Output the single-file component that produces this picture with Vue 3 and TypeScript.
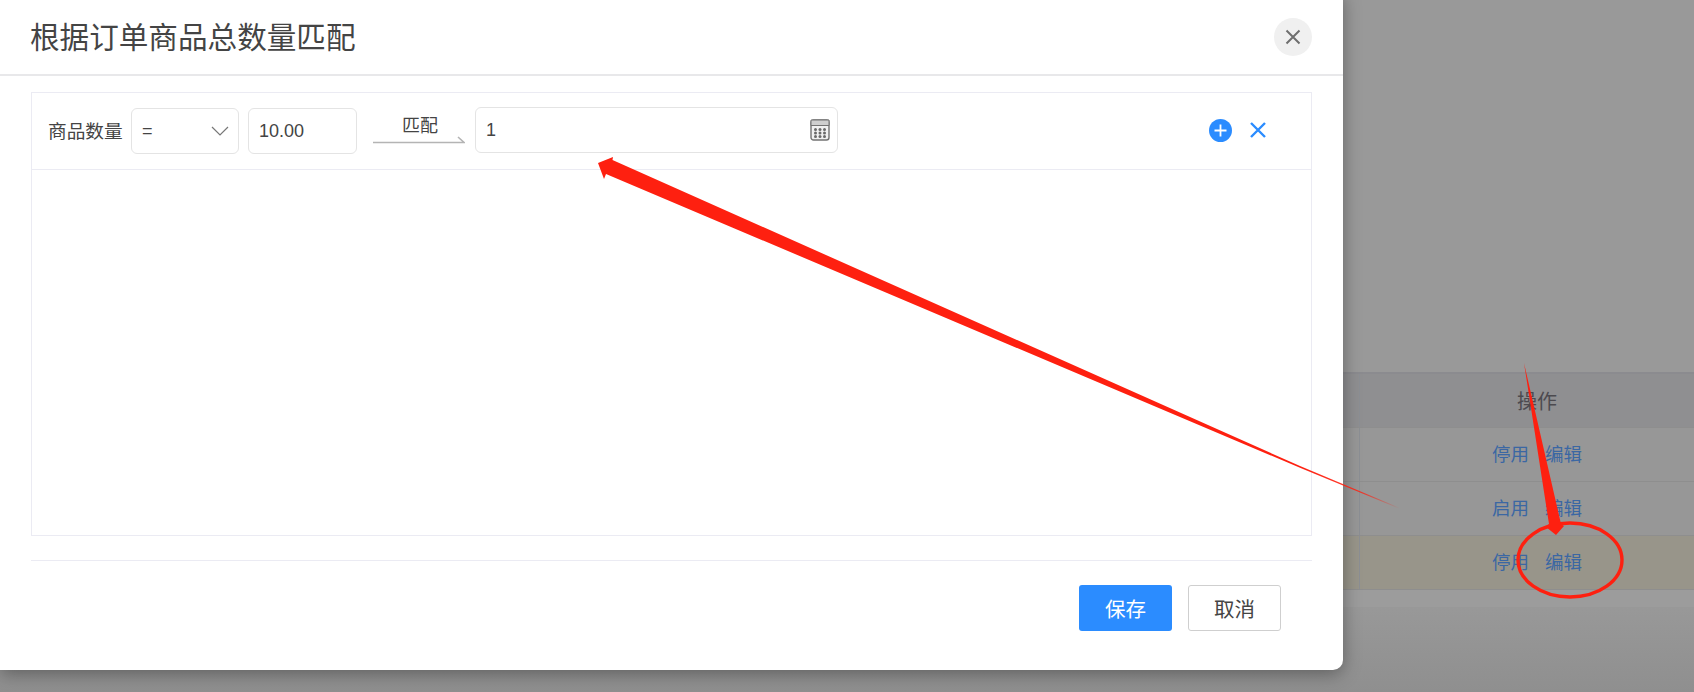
<template>
  <div class="page">
    <div class="bg-table">
      <div class="bg-head">
        <div class="bg-spacer"></div>
        <div class="bg-cell bg-title">操作</div>
      </div>
      <div
        v-for="row in rows"
        :key="row.id"
        class="bg-row"
        :class="{ 'is-active': row.active }"
      >
        <div class="bg-spacer"></div>
        <div class="bg-cell bg-links">
          <a class="bg-link">{{ row.action }}</a>
          <a class="bg-link">编辑</a>
        </div>
      </div>
      <div class="bg-foot"></div>
    </div>

    <section class="modal">
      <header class="modal-head">
        <h2 class="modal-title">根据订单商品总数量匹配</h2>
        <button class="close-btn" type="button">
          <svg width="16" height="16" viewBox="0 0 16 16">
            <path d="M1.5 1.5 L14.5 14.5 M14.5 1.5 L1.5 14.5" stroke="#6f6f6f" stroke-width="2" fill="none" />
          </svg>
        </button>
      </header>

      <div class="modal-body">
        <div class="rule-box">
          <div class="rule-row">
            <span class="rule-label">商品数量</span>
            <div class="field select-field">
              <span>=</span>
              <svg width="18" height="10" viewBox="0 0 18 10">
                <path d="M1 1 L9 9 L17 1" stroke="#777" stroke-width="1.2" fill="none" />
              </svg>
            </div>
            <div class="field num-field">10.00</div>
            <div class="match-arrow">
              <span class="match-text">匹配</span>
              <svg width="92" height="8" viewBox="0 0 92 8">
                <path d="M0 6.5 H91 L85 1" stroke="#b4b4b4" stroke-width="1.6" fill="none" />
              </svg>
            </div>
            <div class="field value-field">
              <span>1</span>
              <svg width="20" height="22" viewBox="0 0 20 22">
                <rect x="1" y="1" width="18" height="20" rx="2.5" fill="#f1f1f1" stroke="#737373" stroke-width="1.4" />
                <path d="M1 1 H19 V6.5 H1 Z" fill="#cfcfcf" stroke="#737373" stroke-width="1" />
                <g fill="#6a6a6a">
                  <circle v-for="dot in dots" :key="dot.id" :cx="dot.x" :cy="dot.y" r="1.5" />
                </g>
              </svg>
            </div>
            <div class="rule-actions">
              <svg width="23" height="23" viewBox="0 0 23 23">
                <circle cx="11.5" cy="11.5" r="11.5" fill="#2b8cff" />
                <path d="M5.5 11.5 H17.5 M11.5 5.5 V17.5" stroke="#fff" stroke-width="1.8" />
              </svg>
              <svg width="16" height="16" viewBox="0 0 16 16">
                <path d="M1 1 L15 15 M15 1 L1 15" stroke="#2b8cff" stroke-width="2.4" fill="none" />
              </svg>
            </div>
          </div>
        </div>

        <footer class="modal-foot">
          <button class="btn btn-primary" type="button">保存</button>
          <button class="btn btn-plain" type="button">取消</button>
        </footer>
      </div>
    </section>

    <!-- 截图上手绘的红色标注 -->
    <svg class="marks" width="1694" height="692" viewBox="0 0 1694 692">
      <defs>
        <linearGradient id="tail" gradientUnits="userSpaceOnUse" x1="1300" y1="466" x2="1400" y2="508">
          <stop offset="0" stop-color="#fe2010" />
          <stop offset="0.6" stop-color="#fe2010" stop-opacity="0.85" />
          <stop offset="1" stop-color="#fe2010" stop-opacity="0" />
        </linearGradient>
      </defs>
      <path
        d="M598 163 L613 157 L612.5 160 L1300 466 L1300 467.8 L606 174 L604 179 Z"
        fill="#fe2010"
      />
      <path d="M1300 466 L1400 508 L1400 509 L1300 467.8 Z" fill="url(#tail)" />
      <ellipse cx="1570" cy="560" rx="52" ry="37" fill="none" stroke="#fe2010" stroke-width="3.4" />
      <path
        d="M1524 363 L1561 524 L1564 526 L1556 535 L1546 527 L1549 524 Z"
        fill="#fe2010"
      />
    </svg>
  </div>
</template>

<script setup lang="ts">
interface BgRow {
  id: number;
  action: string;
  active: boolean;
}

const rows: BgRow[] = [
  { id: 1, action: "停用", active: false },
  { id: 2, action: "启用", active: false },
  { id: 3, action: "停用", active: true },
];

const dots = [10.5, 14, 17.5].flatMap((y) =>
  [5.5, 10, 14.5].map((x) => ({ id: `${x}-${y}`, x, y }))
);
</script>

<style>
html,
body {
  margin: 0;
  background: #929292;
}
</style>

<style scoped>
.page {
  position: relative;
  width: 1694px;
  height: 692px;
  overflow: hidden;
  background: linear-gradient(#999 0, #999 600px, #8f8f8f 692px);
  font-family: "Liberation Sans", "Noto Sans CJK SC", sans-serif;
  color: #444;
}

.bg-table {
  padding-top: 372px;
}

.bg-head,
.bg-row {
  display: flex;
  border-bottom: 1px solid #8e8e8e;
  box-sizing: border-box;
}

.bg-head {
  height: 56px;
  background: #8f8f91;
  border-top: 2px solid #8b8b8f;
}

.bg-row {
  height: 54px;
  background: #979797;
}

.bg-row.is-active {
  background: #98958a;
}

.bg-foot {
  height: 17px;
  background: #9c9c9c;
}

.bg-spacer {
  width: 1360px;
  flex-shrink: 0;
  border-right: 1px solid #8c8f94;
  box-sizing: border-box;
}

.bg-cell {
  flex: 1;
  display: flex;
  align-items: center;
  justify-content: center;
  gap: 16px;
  padding-left: 20px;
}

.bg-links {
  padding-bottom: 4px;
  font-size: 18.5px;
}

.bg-title {
  font-size: 20px;
  color: #4c4a4f;
}

.bg-link {
  color: #3b67a3;
}

.modal {
  position: absolute;
  left: 0;
  top: -10px;
  width: 1343px;
  height: 680px;
  background: #fff;
  border-radius: 0 10px 10px 0;
  box-shadow: 0 4px 18px rgba(0, 0, 0, 0.35);
}

.modal-head {
  height: 86px;
  padding: 10px 31px 1px 30px;
  box-sizing: border-box;
  display: flex;
  align-items: center;
  justify-content: space-between;
  border-bottom: 2px solid #e8e8ea;
}

.modal-title {
  margin: 0 0 2px;
  font-size: 29.6px;
  font-weight: 400;
  color: #444;
}

.close-btn {
  width: 38px;
  height: 38px;
  padding: 0;
  border: none;
  border-radius: 50%;
  background: #f0f0f0;
  display: flex;
  align-items: center;
  justify-content: center;
}

.modal-body {
  padding: 16px 31px 0;
}

.rule-box {
  height: 444px;
  border: 1px solid #ebebf3;
  box-sizing: border-box;
}

.rule-row {
  height: 77px;
  border-bottom: 1px solid #ebebf3;
  display: flex;
  align-items: center;
  padding-left: 16px;
  box-sizing: border-box;
}

.rule-label {
  width: 83px;
  margin-bottom: 4px;
  font-size: 18.7px;
  color: #444;
}

.field {
  height: 46px;
  border: 1px solid #e4e4e4;
  border-radius: 6px;
  box-sizing: border-box;
  display: flex;
  align-items: center;
  font-size: 18px;
  color: #444;
}

.select-field {
  width: 108px;
  padding: 0 9px 0 10px;
  justify-content: space-between;
}

.num-field {
  width: 109px;
  margin-left: 9px;
  padding-left: 10px;
}

.match-arrow {
  width: 92px;
  margin: 0 10px 0 16px;
  padding-bottom: 5px;
  display: flex;
  flex-direction: column;
  align-items: center;
}

.match-text {
  font-size: 18px;
  line-height: 24px;
  margin-bottom: -2px;
  color: #444;
  margin-left: 2px;
}

.match-arrow svg {
  display: block;
}

.value-field {
  width: 363px;
  margin-bottom: 2px;
  padding: 0 7px 0 10px;
  justify-content: space-between;
}

.rule-actions {
  display: flex;
  align-items: center;
  gap: 18px;
  margin: 0 0 2px 371px;
}

.modal-foot {
  margin-top: 24px;
  padding: 24px 31px 0 0;
  border-top: 1px solid #ebebf3;
  display: flex;
  justify-content: flex-end;
  gap: 16px;
}

.btn {
  width: 93px;
  height: 46px;
  border-radius: 3px;
  font-family: inherit;
  font-size: 20.5px;
  padding: 0;
}

.btn-primary {
  background: #2b8cff;
  border: none;
  color: #fff;
}

.btn-plain {
  background: #fff;
  border: 1px solid #cfcfcf;
  color: #444;
}

.marks {
  position: absolute;
  left: 0;
  top: 0;
  pointer-events: none;
}
</style>
